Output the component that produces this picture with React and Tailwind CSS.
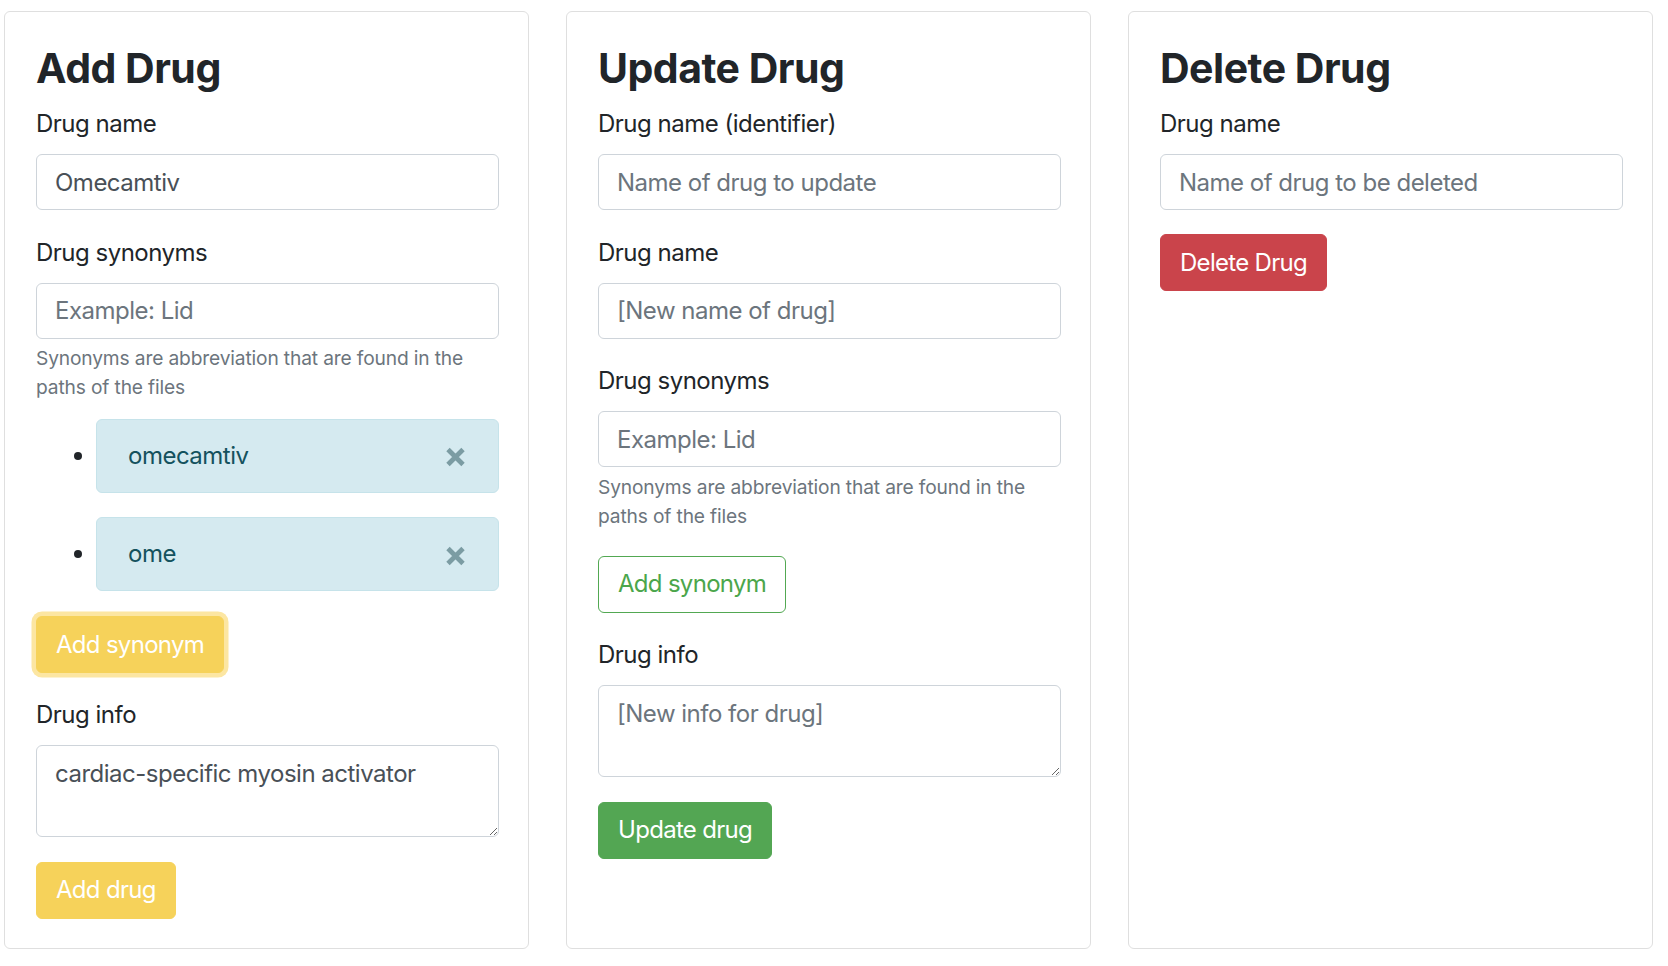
import React from 'react';

// shared pieces
const labelCls = 'block text-[24px] leading-[36px] tracking-[-0.5px] text-[#212529] mb-[12px]';
const inputCls =
  'block w-full h-[56px] px-[18px] text-[24px] leading-[36px] tracking-[-0.5px] text-[#495057] bg-white border border-[#ced4da] rounded-[6px] outline-none placeholder:text-[#6c757d]';
const areaCls =
  'block w-full h-[92px] px-[18px] py-[9.6px] text-[24px] leading-[36px] tracking-[-0.5px] text-[#495057] bg-white border border-[#ced4da] rounded-[6px] outline-none placeholder:text-[#6c757d]';
const hintCls = 'mt-[5.7px] text-[19.2px] leading-[28.8px] tracking-[-0.15px] text-[#6c757d]';
const btnCls = 'h-[57px] px-[19px] border rounded-[6px] text-[24px] leading-[36px] tracking-[-0.7px]';

function Card({ title, children }) {
  return (
    <div className="w-[525px] shrink-0 bg-white border border-[#dfdfdf] rounded-[6px] pl-[31px] pr-[29px] pt-[32px] pb-[29px]">
      <h1 className="text-[41px] leading-[49px] font-bold tracking-[-0.5px] text-[#212529] mb-[13px]">{title}</h1>
      {children}
    </div>
  );
}

function Close() {
  return (
    <svg width="21" height="20" viewBox="0 0 21 20" className="mt-[3px]">
      <path d="M3 2.5 L18 17.5 M18 2.5 L3 17.5" stroke="#7b9ca3" strokeWidth="4.8" fill="none" />
    </svg>
  );
}

function Synonym({ name }) {
  return (
    <li className="flex items-center">
      <span className="w-[8px] h-[8px] rounded-full bg-[#212529] shrink-0 mr-[14px]" />
      <div className="flex-1 h-[74px] flex items-center justify-between pl-[31px] pr-[32px] bg-[#d5eaf0] border border-[#c6e3ea] rounded-[6px] text-[24px] leading-[36px] tracking-[-0.5px] text-[#14525e]">
        <span>{name}</span>
        <Close />
      </div>
    </li>
  );
}

function AddDrug() {
  return (
    <Card title="Add Drug">
      <div className="mb-[24.6px]">
        <label className={labelCls}>Drug name</label>
        <input className={inputCls} defaultValue="Omecamtiv" />
      </div>
      <div>
        <label className={labelCls}>Drug synonyms</label>
        <input className={inputCls} placeholder="Example: Lid" />
        <p className={hintCls}>Synonyms are abbreviation that are found in the paths of the files</p>
      </div>
      <ul className="mt-[16.8px] pl-[38px] flex flex-col gap-[24.6px]">
        <Synonym name="omecamtiv" />
        <Synonym name="ome" />
      </ul>
      <button className={`${btnCls} mt-[25.2px] border-[#f6d25a] bg-[#f6d25a] text-white shadow-[0_0_0_4.5px_#fce6a2]`}>
        Add synonym
      </button>
      <div className="mt-[23.8px]">
        <label className={labelCls}>Drug info</label>
        <textarea className={areaCls} defaultValue="cardiac-specific myosin activator" />
      </div>
      <button className={`${btnCls} mt-[24.7px] border-[#f6d25a] bg-[#f6d25a] text-white`}>
        Add drug
      </button>
    </Card>
  );
}

function UpdateDrug() {
  return (
    <Card title="Update Drug">
      <div className="mb-[24.6px]">
        <label className={labelCls}>Drug name (identifier)</label>
        <input className={inputCls} placeholder="Name of drug to update" />
      </div>
      <div className="mb-[24.6px]">
        <label className={labelCls}>Drug name</label>
        <input className={inputCls} placeholder="[New name of drug]" />
      </div>
      <div>
        <label className={labelCls}>Drug synonyms</label>
        <input className={inputCls} placeholder="Example: Lid" />
        <p className={hintCls}>Synonyms are abbreviation that are found in the paths of the files</p>
      </div>
      <button className={`${btnCls} mt-[25.5px] border-[#52a852] bg-white text-[#4ba64b]`}>
        Add synonym
      </button>
      <div className="mt-[24.3px]">
        <label className={labelCls}>Drug info</label>
        <textarea className={areaCls} placeholder="[New info for drug]" />
      </div>
      <button className={`${btnCls} mt-[24.7px] border-[#53a653] bg-[#53a653] text-white`}>
        Update drug
      </button>
    </Card>
  );
}

function DeleteDrug() {
  return (
    <Card title="Delete Drug">
      <div>
        <label className={labelCls}>Drug name</label>
        <input className={inputCls} placeholder="Name of drug to be deleted" />
      </div>
      <button className={`${btnCls} mt-[24.3px] border-[#ca444b] bg-[#ca444b] text-white`}>
        Delete Drug
      </button>
    </Card>
  );
}

export default function App() {
  return (
    <div className="w-full h-[966px] bg-white font-['Inter','Noto_Sans',sans-serif] pl-[4px] pt-[11px] overflow-hidden">
      <div className="flex items-stretch gap-[37px]">
        <AddDrug />
        <UpdateDrug />
        <DeleteDrug />
      </div>
    </div>
  );
}
